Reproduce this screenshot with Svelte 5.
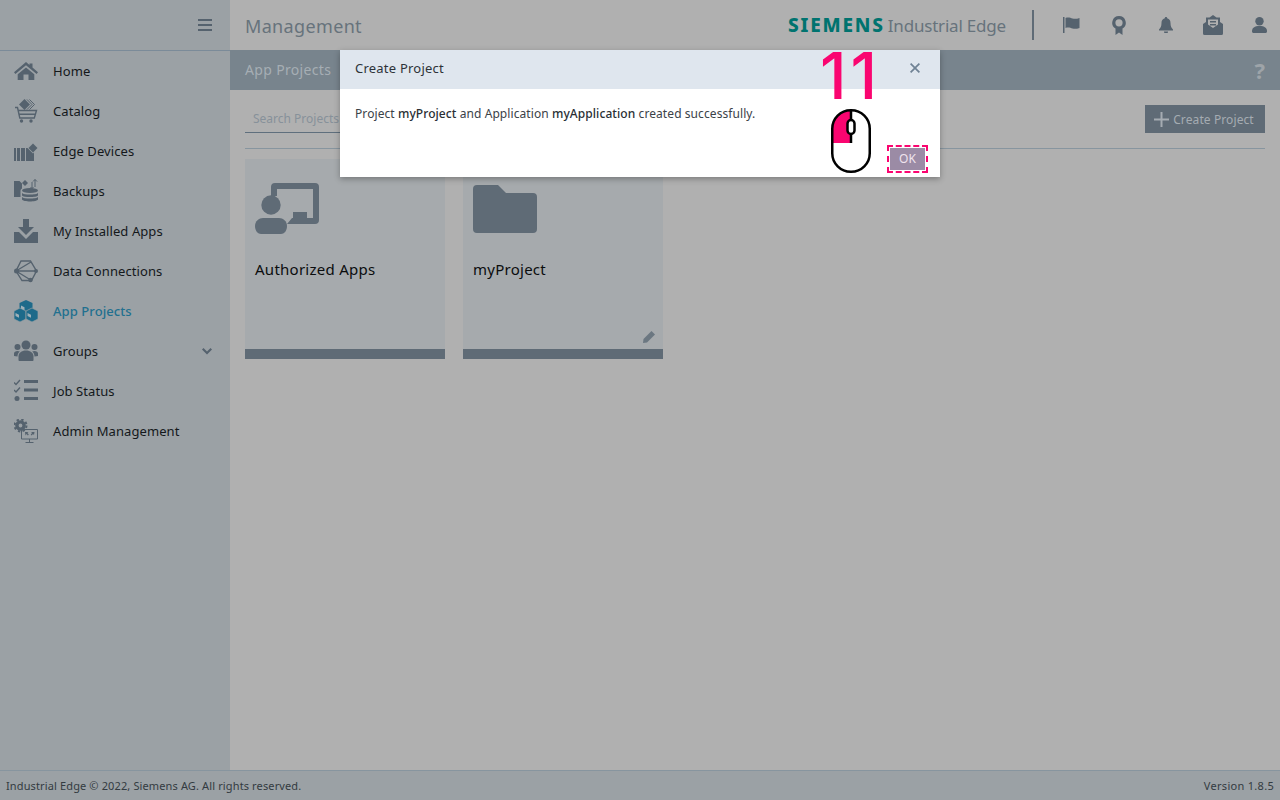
<script>
  const nav = [
    { label: 'Home', icon: 'home' },
    { label: 'Catalog', icon: 'catalog' },
    { label: 'Edge Devices', icon: 'devices' },
    { label: 'Backups', icon: 'backups' },
    { label: 'My Installed Apps', icon: 'installed' },
    { label: 'Data Connections', icon: 'data' },
    { label: 'App Projects', icon: 'projects', active: true },
    { label: 'Groups', icon: 'groups', more: true },
    { label: 'Job Status', icon: 'jobs' },
    { label: 'Admin Management', icon: 'admin' }
  ];
</script>

<div class="page">
  <div class="shell">
    <aside class="sidebar">
      <div class="burger-row">
        <svg class="burger" width="14" height="12" viewBox="0 0 14 12"><path d="M0 0h14v2H0zM0 5h14v2H0zM0 10h14v2H0z" /></svg>
      </div>
      <nav>
        {#each nav as item}
          <div class="nav-item" class:active={item.active}>
            <svg class="nav-icon" width="24" height="24" viewBox="0 0 24 24">
              {#if item.icon === 'home'}
                <path d="M12 3l3.500 3V4.500h3v4.100L24 13.300 22.600 15 12 6.300 1.400 15 0 13.300z" />
                <path d="M12 8.500l8.300 6.800V21h-5.800v-5.500h-5V21H3.700v-5.700z" />
              {:else if item.icon === 'catalog'}
                <path d="M10.500 0L16 5.500 10.500 11 5 5.500z" />
                <path class="line thin" d="M13 .500l5 5-5 5M15.500 .500l5 5-5 5" />
                <path class="line" d="M1 8.500h2.500l2.300 10.500h14.500L22.500 11.500H4.200M5 15.300h16.300" />
                <circle cx="7.500" cy="22" r="1.700" /><circle cx="17" cy="22" r="1.700" />
              {:else if item.icon === 'devices'}
                <path d="M0 9h2v13H0zM3 9h3v13H3zM7 9h4v13H7z" />
                <path d="M12 9h1.500l5.500 5.500 1-1V22h-8z" />
                <path d="M19 4.500l4.500 4.500-4.500 4.500L14.500 9z" />
              {:else if item.icon === 'backups'}
                <path d="M0 2h5.500L8 4.500v5c-1 .500-1.500 1.300-1.500 2.500v6H0z" />
                <path d="M11 1l3 3-3 3-3-3z" />
                <ellipse cx="16" cy="11.500" rx="8" ry="2.500" />
                <path d="M8 14c1.500 2 14.500 2 16 0v2.500c-1.500 2-14.500 2-16 0zM8 18c1.500 2 14.500 2 16 0v2.500c-1.500 2.600-14.500 2.600-16 0z" />
                <path class="line thin" d="M21 8V.500M19 2.500l2-2 2 2M18 3v6.500M16.500 8l1.500 1.500L19.500 8" />
              {:else if item.icon === 'installed'}
                <path d="M9 0h6v8h5l-8 8-8-8h5z" />
                <path d="M0 13h5l7 7 7-7h5v11H0z" />
              {:else if item.icon === 'data'}
                <path class="line" d="M7 2h9.500L22.500 12l-5 9.500H8L2 12zM2 12l15-9M2 12h20M2 12l15.500 9.500" />
                <circle cx="2.500" cy="12" r="2.500" /><circle cx="22" cy="12" r="2" /><circle cx="16.500" cy="21" r="2.200" />
              {:else if item.icon === 'projects'}
                <path d="M12 1l6.500 3v8L12 15l-6.500-3V4z" />
                <path class="cube" d="M6 9l6 3v8l-6 3-6-3v-8z" />
                <path class="cube" d="M18 9l6 3v8l-6 3-6-3v-8z" />
                <path class="patch" d="M7 6.500l3.500 1.700v3L7 9.500zM1.500 14L5 15.700v3L1.500 17zM13.500 14l3.500 1.700v3L13.500 17z" />
              {:else if item.icon === 'groups'}
                <circle cx="12" cy="6" r="4.500" /><circle cx="3.500" cy="8" r="3" /><circle cx="20.500" cy="8" r="3" />
                <path d="M4.500 21v-3.500c0-3.500 3-6 7.500-6s7.500 2.500 7.500 6V21c0 .600-.500 1-1 1h-13c-.500 0-1-.400-1-1z" />
                <path d="M0 17v-2.500C0 13 1.500 12 3.500 12c1 0 1.700.200 2.300.600-1.500 1.200-2.300 3-2.300 4.900zM24 17v-2.500c0-1.500-1.500-2.500-3.500-2.500-1 0-1.700.200-2.300.600 1.500 1.200 2.300 3 2.300 4.900z" />
              {:else if item.icon === 'jobs'}
                <path class="line" d="M0 3.500l2 2L6 1M0 11l2 2 4-4.500" />
                <path d="M10 1h14v3H10zM10 9.500h14v3H10zM10 18h14v3H10z" />
                <circle cx="3" cy="19.500" r="2.500" />
              {:else if item.icon === 'admin'}
                <circle class="gear" cx="6.500" cy="6.500" r="3.600" />
                <circle class="teeth" cx="6.500" cy="6.500" r="6" />
                <path class="line thin" d="M7.500 10.500h16v9.500h-16zM15.500 20v3M11.500 23.500h8" />
                <path d="M11 13h3.500l-1.100 1.100 1.400 1.400-.9.900-1.400-1.400L11.500 16.500zM20.500 13H17l1.100 1.100-1.400 1.400.9.900 1.400-1.400 1 1z" />
              {/if}
            </svg>
            <span class="nav-label">{item.label}</span>
            {#if item.more}
              <svg class="chevron" width="10" height="7" viewBox="0 0 10 7"><path d="M0 1.500L1.500 0 5 3.500 8.500 0 10 1.500 5 6.500z" /></svg>
            {/if}
          </div>
        {/each}
      </nav>
    </aside>

    <main class="main">
      <header class="topbar">
        <div class="title">Management</div>
        <div class="brand"><span class="logo">SIEMENS</span><span class="product">Industrial Edge</span></div>
        <div class="divider"></div>
        <div class="top-icons">
          <span><svg width="17" height="16" viewBox="0 0 17 16"><path d="M0 0h1.500v16H0zM2.500 1c3-1 5 0 7 .500 2 .500 4 .500 7-.500v10c-3 1-5 1-7 .500-2-.500-4-1.500-7-.500z" /></svg></span>
          <span><svg width="14" height="19" viewBox="0 0 14 19"><path fill-rule="evenodd" d="M7 0a6.800 6.800 0 0 1 3.500 12.600V19L7 16.500 3.500 19v-6.400A6.800 6.800 0 0 1 7 0zm0 3.200a3.600 3.600 0 1 0 0 7.200 3.600 3.600 0 0 0 0-7.200z" /></svg></span>
          <span><svg width="14" height="16" viewBox="0 0 14 16"><path d="M7 0c.700 0 1.200.500 1.200 1.200C10.500 1.800 11.500 3.500 11.500 6c0 3.500 1 5 2.500 6.500v1H0v-1C1.500 11 2.500 9.500 2.500 6c0-2.500 1-4.200 3.300-4.800C5.800.500 6.300 0 7 0zM5 14.500h4a2 2 0 0 1-4 0z" /></svg></span>
          <span><svg width="20" height="20" viewBox="0 0 20 20"><path fill-rule="evenodd" d="M10 0l3.500 2.500H17V7l3 2v9.500a1.500 1.500 0 0 1-1.500 1.500h-17A1.500 1.500 0 0 1 0 18.500V9l3-2V2.500h3.500zM5 4.500v5l5 3.500 5-3.500v-5z" /><path d="M7 6h6v1.500H7zM7 9h6v1.500H7z" /></svg></span>
          <span><svg width="15" height="16" viewBox="0 0 15 16"><circle cx="7.500" cy="4.200" r="4.200" /><path d="M0 14c0-3 2.500-5 7.500-5s7.500 2 7.500 5v.500c0 .800-.700 1.500-1.500 1.500h-12C.700 16 0 15.300 0 14.500z" /></svg></span>
        </div>
      </header>

      <div class="subbar">
        <span class="subtitle">App Projects</span>
        <span class="help">?</span>
      </div>

      <div class="content">
        <div class="toolbar">
          <div class="search">Search Projects</div>
          <button class="create">
            <svg width="15" height="15" viewBox="0 0 15 15"><path d="M6.500 0h2v6.500H15v2H8.500V15h-2V8.500H0v-2h6.500z" /></svg>
            Create Project
          </button>
        </div>
        <div class="cards">
          <div class="card">
            <svg class="card-icon" width="64" height="52" viewBox="0 0 64 52">
              <path d="M20 0h40a4 4 0 0 1 4 4v33a4 4 0 0 1-4 4H32l5-6h1v-6h14v6h6V6H22v7h-6V4a4 4 0 0 1 4-4z" />
              <circle cx="16" cy="22" r="9.700" />
              <path d="M0 43c0-5 4-8 8-8h16c4 0 8 3 8 8 0 5-3 8-6 8H6c-3 0-6-3-6-8z" />
            </svg>
            <div class="card-title">Authorized Apps</div>
          </div>
          <div class="card">
            <svg class="card-icon" width="64" height="48" viewBox="0 0 64 48">
              <path d="M4 0h21l8 8h27a4 4 0 0 1 4 4v32a4 4 0 0 1-4 4H4a4 4 0 0 1-4-4V4a4 4 0 0 1 4-4z" />
            </svg>
            <div class="card-title">myProject</div>
            <svg class="pencil" width="12" height="12" viewBox="0 0 12 12"><path d="M8.500 0L12 3.500 4 11.500 0 12l.500-4z" /></svg>
          </div>
        </div>
      </div>
    </main>
  </div>

  <footer class="footer">
    <span>Industrial Edge © 2022, Siemens AG. All rights reserved.</span>
    <span class="version">Version 1.8.5</span>
  </footer>

  <div class="dialog">
    <div class="dialog-head">
      <span>Create Project</span>
      <svg width="10" height="10" viewBox="0 0 10 10"><path d="M1.200 0L5 3.800 8.800 0 10 1.200 6.200 5 10 8.800 8.800 10 5 6.200 1.200 10 0 8.800 3.800 5 0 1.200z" /></svg>
    </div>
    <div class="dialog-body">
      Project <b>myProject</b> and Application <b>myApplication</b> created successfully.
    </div>
    <div class="dialog-foot">
      <button class="ok">OK</button>
    </div>
    <div class="step">11</div>
    <svg class="mouse" width="40" height="64" viewBox="0 0 40 64">
      <path d="M20 1.500C9 1.500 1.500 9 1.500 20v14h18.500V1.500z" fill="#fa0570" />
      <rect x="1.250" y="1.250" width="37.500" height="61.500" rx="18.500" fill="none" stroke="#000" stroke-width="2.500" />
      <path d="M20 1v33" stroke="#000" stroke-width="2.500" fill="none" />
      <rect x="16.500" y="11" width="7" height="14" rx="3.500" fill="#fff" stroke="#000" stroke-width="2.500" />
    </svg>
  </div>
</div>

<style>
  :global(body) { margin: 0; }
  .page {
    position: relative;
    width: 1280px;
    height: 800px;
    overflow: hidden;
    display: flex;
    flex-direction: column;
    background: #b0b0b0;
    font-family: "Noto Sans", sans-serif;
    font-size: 13px;
    color: #111;
  }
  .shell { flex: 1; display: flex; min-height: 0; }
  .sidebar { width: 230px; background: #9ba1a5; flex-shrink: 0; }
  .burger-row {
    height: 51px;
    border-bottom: 1px solid #7b8b99;
    display: flex;
    align-items: center;
    justify-content: flex-end;
    padding-right: 18px;
    box-sizing: border-box;
  }
  .burger { fill: #55626e; }
  .nav-item {
    height: 40px;
    display: flex;
    align-items: center;
    padding-left: 14px;
    color: #14181b;
    letter-spacing: .08px;
  }
  .nav-icon { fill: #55626e; flex-shrink: 0; }
  .nav-icon .line { fill: none; stroke: #55626e; stroke-width: 1.4; }
  .nav-icon .thin { stroke-width: 1; }
  .nav-icon .gear { fill: none; stroke: #55626e; stroke-width: 3.400; }
  .nav-icon .teeth { fill: none; stroke: #55626e; stroke-width: 2; stroke-dasharray: 2.350 2.360; }
  .nav-icon .cube { stroke: #9ba1a5; stroke-width: .7; }
  .nav-icon .patch { fill: #9fb0b8; }
  .nav-label { margin-left: 15px; flex: 1; }
  .chevron { fill: #55626e; margin-right: 18px; }
  .nav-item.active { color: #22708f; font-weight: 500; }
  .nav-item.active .nav-icon { fill: #1d6a8a; }

  .main { flex: 1; display: flex; flex-direction: column; min-width: 0; }
  .topbar { height: 50px; display: flex; align-items: center; padding-left: 15px; }
  .title { font-size: 18px; letter-spacing: .35px; color: #67737c; flex: 1; margin-top: 2px; }
  .brand { display: flex; align-items: center; }
  .logo { font-weight: 800; font-size: 19px; color: #00736f; letter-spacing: 1.8px; }
  .product { font-size: 17px; letter-spacing: -.2px; color: #67737c; margin-left: 3px; }
  .divider { width: 2px; height: 30px; background: #5f6b76; margin-left: 26px; }
  .top-icons { display: flex; align-items: center; margin-left: 14px; margin-right: -3px; }
  .top-icons span { width: 47px; flex-shrink: 0; display: flex; justify-content: center; }
  .top-icons svg { fill: #55626e; }

  .subbar {
    height: 40px;
    background: #78848d;
    display: flex;
    align-items: center;
    justify-content: space-between;
    padding: 0 15px;
    color: #a6aeb4;
  }
  .subtitle { font-size: 14px; letter-spacing: .33px; margin-top: -1px; }
  .help { font-size: 22px; font-weight: 700; color: #9ea4a9; }

  .content { padding: 0 15px; }
  .toolbar {
    height: 59px;
    border-bottom: 1px solid #87959f;
    display: flex;
    justify-content: space-between;
    align-items: flex-start;
    padding-top: 14px;
    margin-bottom: 10px;
    box-sizing: border-box;
  }
  .search {
    width: 300px;
    height: 29px;
    line-height: 29px;
    box-sizing: border-box;
    padding-left: 8px;
    font-size: 12px;
    color: #87919a;
    border-bottom: 1px solid #5f6f7d;
  }
  .create {
    margin: 1px 0 0;
    width: 120px;
    height: 28px;
    border: 0;
    padding: 0;
    background: #5f6b76;
    color: #a5acb2;
    font: 12px "Noto Sans", sans-serif;
    letter-spacing: .1px;
    display: flex;
    align-items: center;
    justify-content: center;
    gap: 4px;
  }
  .create svg { fill: #a5acb2; margin-left: -2px; }

  .cards { display: flex; gap: 18px; }
  .card {
    position: relative;
    width: 200px;
    height: 200px;
    box-sizing: border-box;
    background: #a6aaad;
    border-bottom: 10px solid #5f6b76;
    padding: 24px 10px 0;
    font-size: 15px;
    letter-spacing: .26px;
    color: #0b0d0e;
  }
  .card-icon { fill: #5f6b76; display: block; height: 52px; }
  .card-title { margin-top: 24px; line-height: 20px; }
  .pencil { position: absolute; right: 8px; bottom: 6px; fill: #6b7781; }

  .footer {
    height: 30px;
    box-sizing: border-box;
    background: #9ba1a5;
    border-top: 1px solid #87959f;
    display: flex;
    align-items: center;
    justify-content: space-between;
    padding: 0 6px;
    font-size: 11px;
    letter-spacing: .13px;
    color: #333b41;
  }
  .version { letter-spacing: .3px; }

  .dialog {
    position: absolute;
    left: 340px;
    top: 50px;
    width: 600px;
    height: 127px;
    background: #fff;
    box-shadow: 0 2px 6px rgba(0, 0, 0, .3);
    font-size: 12px;
    letter-spacing: .08px;
    color: #3b4248;
  }
  .dialog-head {
    height: 39px;
    background: #dfe6ee;
    display: flex;
    align-items: center;
    justify-content: space-between;
    box-sizing: border-box;
    padding: 0 20px 3px 15px;
    font-size: 13px;
    letter-spacing: .22px;
    color: #2d3339;
  }
  .dialog-head svg { fill: #6f8294; }
  .dialog-body { padding: 16px 15px 0; line-height: 17px; }
  .dialog-body b { font-weight: 500; color: #2a2f34; }
  .dialog-foot { position: absolute; right: 15px; bottom: 7px; }
  .ok {
    display: block;
    width: 35px;
    height: 22px;
    border: 0;
    padding: 0 0 2px;
    background: #9b8ba5;
    color: #f0e3ee;
    font: 12px "Noto Sans", sans-serif;
    outline: 2px dashed #fa0570;
    outline-offset: 1px;
  }
  .step {
    position: absolute;
    left: 480px;
    top: -12px;
    font: 500 64px/76px Inter, sans-serif;
    letter-spacing: 4px;
    color: #fa0570;
  }
  .mouse { position: absolute; left: 491px; top: 59px; }
</style>
